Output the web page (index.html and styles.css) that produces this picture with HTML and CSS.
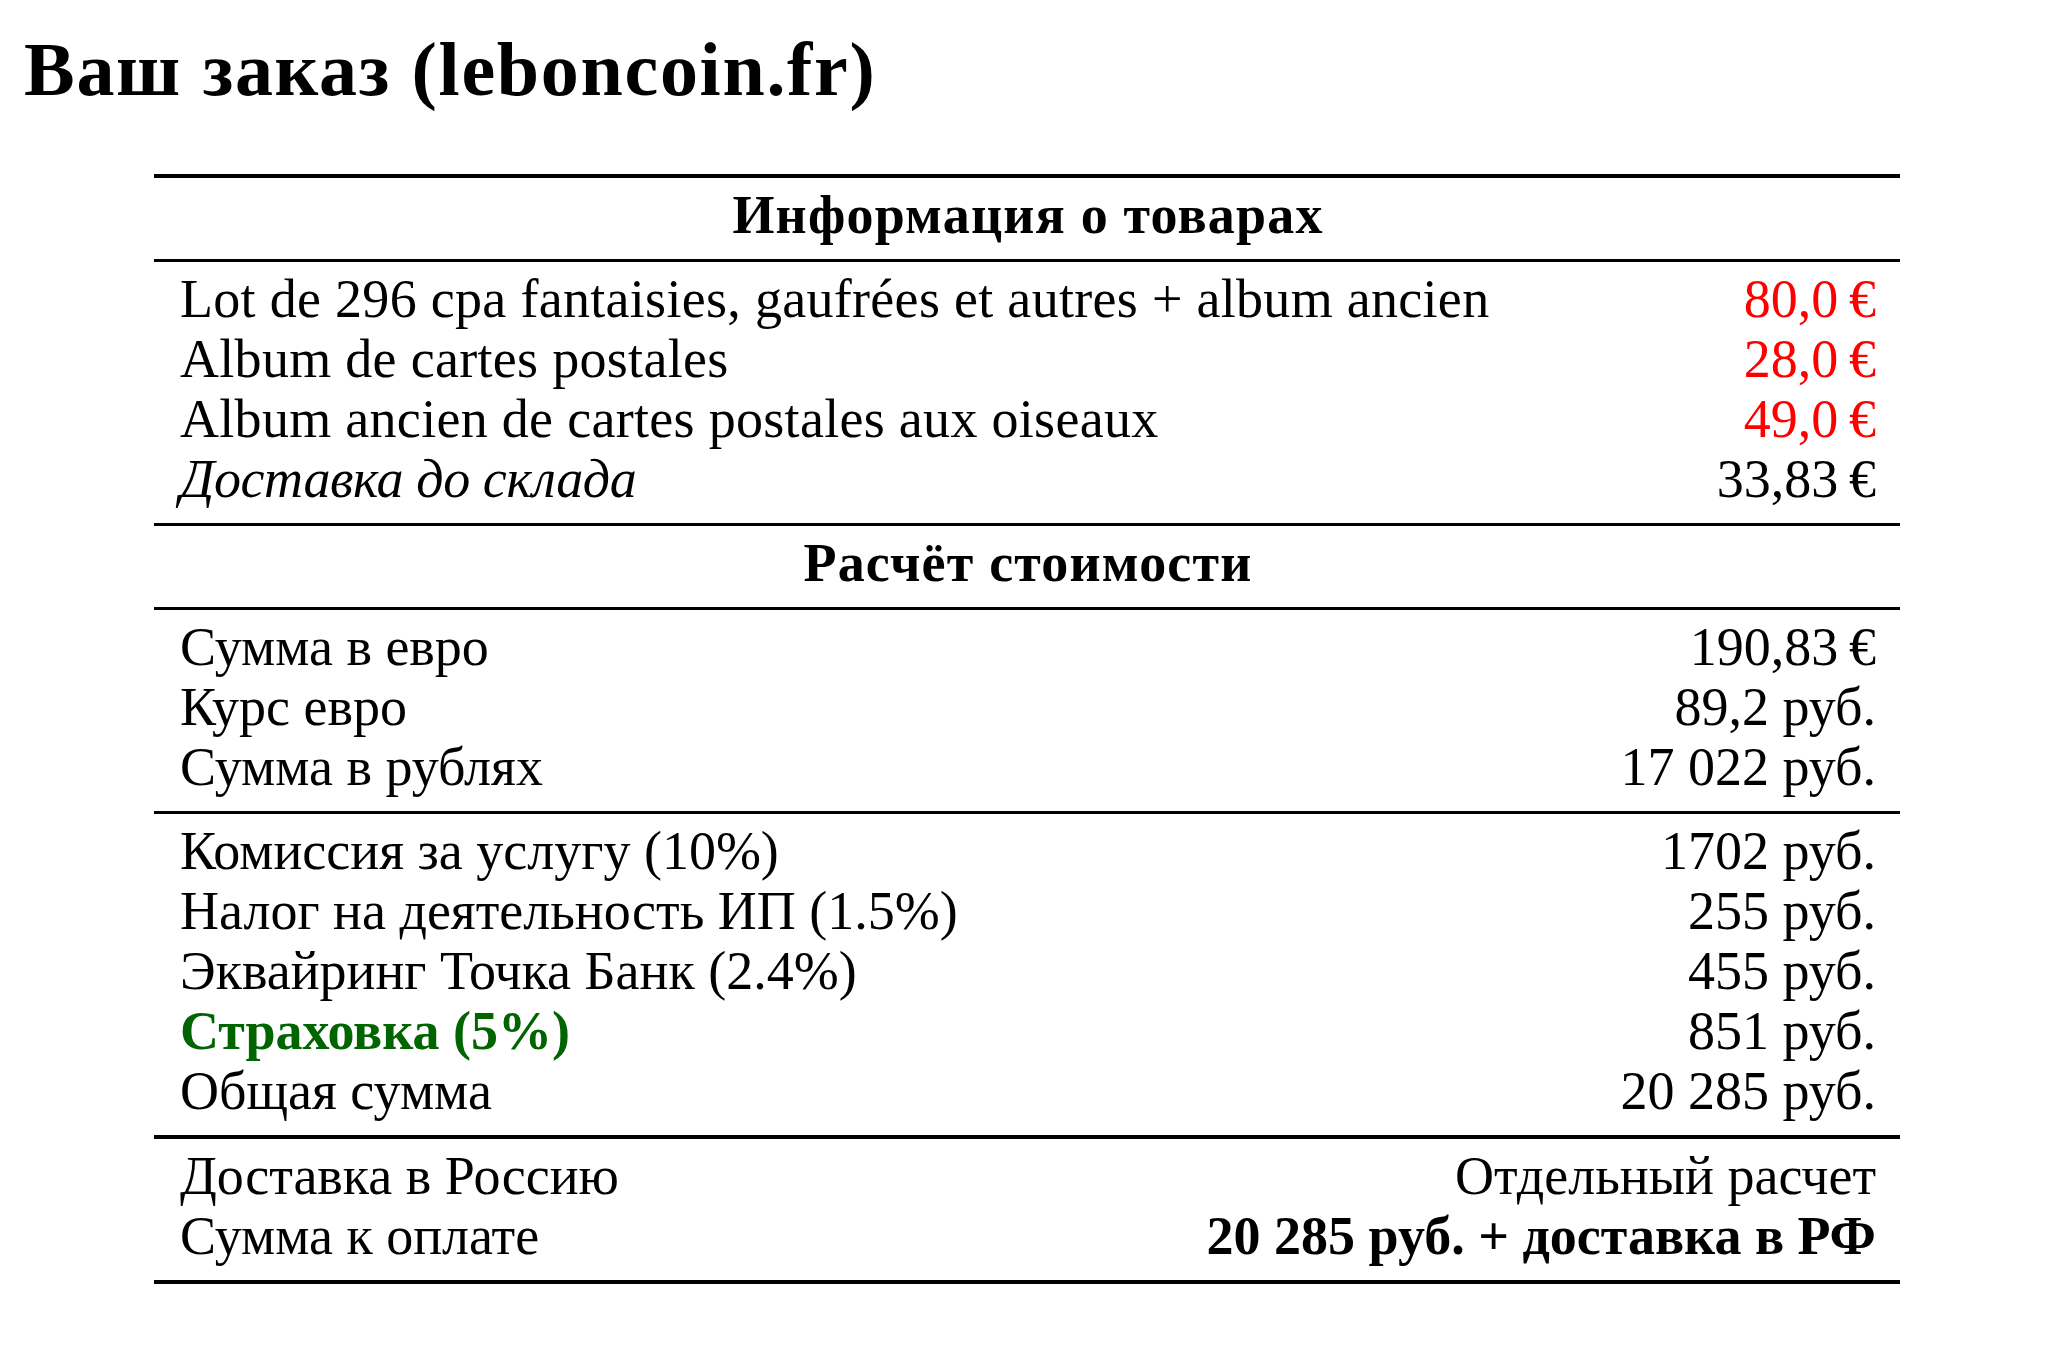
FILE: index.html
```html
<!DOCTYPE html>
<html lang="ru">
<head>
<meta charset="utf-8">
<title>Ваш заказ (leboncoin.fr)</title>
<link rel="stylesheet" href="styles.css">
</head>
<body>
<div class="page">
  <h1 class="title">Ваш заказ (leboncoin.fr)</h1>
  <div class="order">
    <div class="rule rule-heavy"></div>
    <div class="block">
      <div class="head">Информация о товарах</div>
    </div>
    <div class="rule"></div>
    <div class="block">
      <div class="row"><span class="latin">Lot de 296 cpa fantaisies, gaufrées et autres + album ancien</span><span class="red">80,0&#8201;€</span></div>
      <div class="row"><span class="latin">Album de cartes postales</span><span class="red">28,0&#8201;€</span></div>
      <div class="row"><span class="latin">Album ancien de cartes postales aux oiseaux</span><span class="red">49,0&#8201;€</span></div>
      <div class="row"><span class="it">Доставка до склада</span><span>33,83&#8201;€</span></div>
    </div>
    <div class="rule"></div>
    <div class="block">
      <div class="head">Расчёт стоимости</div>
    </div>
    <div class="rule"></div>
    <div class="block">
      <div class="row"><span>Сумма в евро</span><span>190,83&#8201;€</span></div>
      <div class="row"><span>Курс евро</span><span>89,2 руб.</span></div>
      <div class="row"><span>Сумма в рублях</span><span>17 022 руб.</span></div>
    </div>
    <div class="rule"></div>
    <div class="block">
      <div class="row"><span>Комиссия за услугу (10%)</span><span>1702 руб.</span></div>
      <div class="row"><span>Налог на деятельность ИП (1.5%)</span><span>255 руб.</span></div>
      <div class="row"><span>Эквайринг Точка Банк (2.4%)</span><span>455 руб.</span></div>
      <div class="row"><span class="green">Страховка (5%)</span><span>851 руб.</span></div>
      <div class="row"><span>Общая сумма</span><span>20 285 руб.</span></div>
    </div>
    <div class="rule rule-heavy"></div>
    <div class="block">
      <div class="row"><span>Доставка в Россию</span><span>Отдельный расчет</span></div>
      <div class="row"><span>Сумма к оплате</span><span class="bold">20 285 руб. + доставка в РФ</span></div>
    </div>
    <div class="rule rule-heavy"></div>
  </div>
</div>
</body>
</html>
```
FILE: styles.css
```css
html, body {
  margin: 0;
  padding: 0;
  background: #ffffff;
}

body {
  font-family: "Liberation Serif", "Times New Roman", serif;
  color: #000000;
}

.page {
  padding: 31px 0 0 24px;
}

.title {
  margin: 0;
  font-size: 76px;
  line-height: 76px;
  font-weight: bold;
  letter-spacing: 1.7px;
}

.order {
  margin: 67px 0 0 130px;
  width: 1746px;
  font-size: 54px;
}

.rule {
  height: 3px;
  background: #000000;
}

.rule-heavy {
  height: 4px;
}

.block {
  padding: 7px 24px 14px 26px;
}

.row {
  display: flex;
  justify-content: space-between;
  line-height: 60px;
  height: 60px;
  white-space: nowrap;
}

.head {
  line-height: 60px;
  height: 60px;
  text-align: center;
  font-weight: bold;
  letter-spacing: 1.2px;
}

.latin {
  letter-spacing: 0.3px;
}

.it {
  font-style: italic;
  letter-spacing: -0.4px;
}

.red {
  color: #ff0000;
}

.green {
  color: #006400;
  font-weight: bold;
}

.bold {
  font-weight: bold;
}
```
